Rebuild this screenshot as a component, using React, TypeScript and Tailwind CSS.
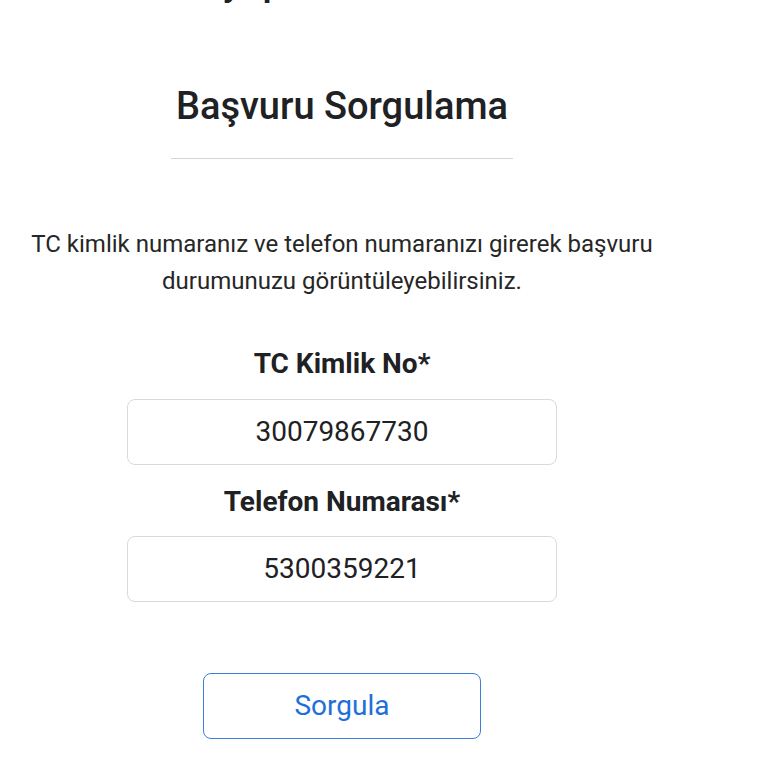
export default function App() {
  const font = { fontFamily: "Roboto, 'Noto Sans', sans-serif" };
  return (
    <div className="w-[684px] bg-white flex flex-col items-center text-[#202124]" style={font}>
      <div className="mt-[-40px] text-[38px] leading-[44px] font-medium whitespace-nowrap">Eyüp Sultan Kart</div>
      <h1 className="mt-[80px] text-[38px] leading-[44px] font-medium">Başvuru Sorgulama</h1>
      <div className="mt-[30px] w-[342px] border-t border-[#d6d6d6]" />
      <p className="mt-[67px] text-center text-[24px] leading-[37px] text-[#262626] px-[20px]">
        TC kimlik numaranız ve telefon numaranızı girerek başvuru durumunuzu görüntüleyebilirsiniz.
      </p>
      <label className="mt-[48px] text-[28px] leading-[32px] font-bold">TC Kimlik No*</label>
      <div className="mt-[19px] w-[430px] h-[66px] border border-[#d9d9d9] rounded-[8px] flex items-center justify-center text-[28px]">
        30079867730
      </div>
      <label className="mt-[21px] text-[28px] leading-[32px] font-bold">Telefon Numarası*</label>
      <div className="mt-[18px] w-[430px] h-[66px] border border-[#d9d9d9] rounded-[8px] flex items-center justify-center text-[28px]">
        5300359221
      </div>
      <button className="mt-[71px] w-[278px] h-[66px] border-[1.5px] border-[#3b7ddd] rounded-[8px] flex items-center justify-center text-[28px] text-[#1e6fd9] bg-white">
        Sorgula
      </button>
      <div className="h-[40px]" />
    </div>
  );
}
